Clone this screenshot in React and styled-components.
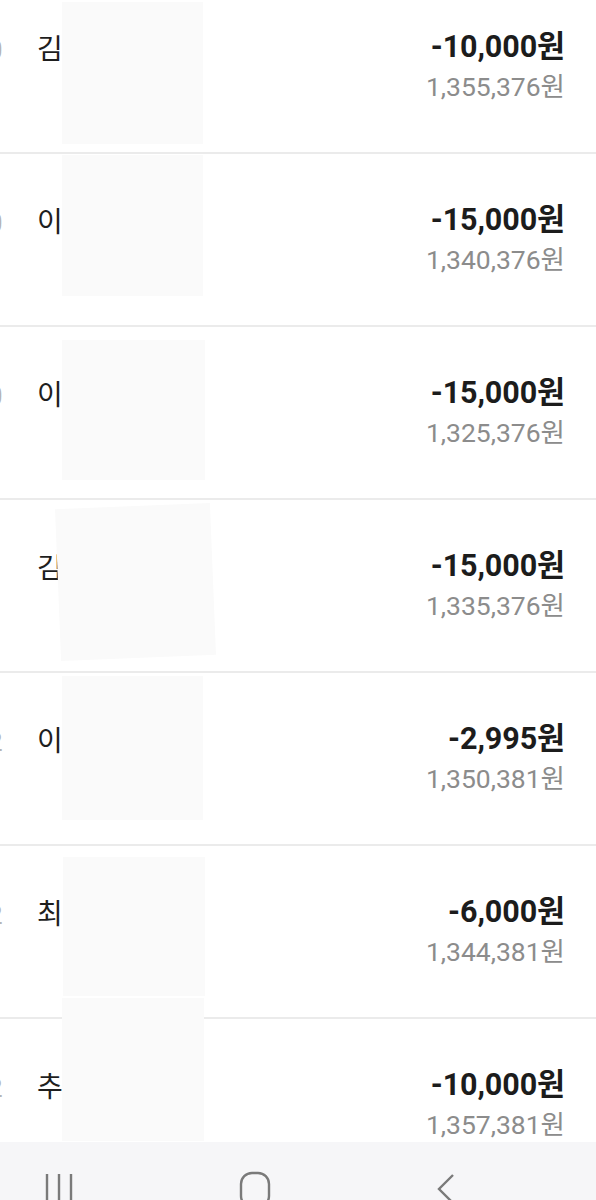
import React from "react";
import styled, { createGlobalStyle } from "styled-components";

const GlobalStyle = createGlobalStyle`
  html, body {
    margin: 0;
    padding: 0;
    background: #ffffff;
    overflow: hidden;
  }
  body {
    font-family: "Roboto", "Noto Sans CJK KR", "Noto Sans", sans-serif;
  }
`;

const Screen = styled.div`
  width: 596px;
  height: 1200px;
  display: flex;
  flex-direction: column;
  overflow: hidden;
  background: #ffffff;
`;

const List = styled.div`
  flex: 1;
  overflow: hidden;
  min-height: 0;
`;

const Rows = styled.div`
  margin-top: -19px;
`;

const Row = styled.div`
  position: relative;
  height: 173px;
  box-sizing: border-box;
  display: flex;
  align-items: center;
  padding: 3px 31px 0 0;
  border-bottom: 2px solid #ebebeb;
`;

const Side = styled.div`
  width: 37px;
  flex-shrink: 0;
  align-self: flex-start;
  padding-top: 47px;
  overflow: visible;
`;

const Stub = styled.span`
  display: block;
  margin-left: -12px;
  font-size: 26px;
  line-height: 38px;
  color: #b5b5b5;
`;

const Body = styled.div`
  flex: 1;
  display: grid;
  grid-template-columns: 1fr auto;
  align-items: center;
`;

const Name = styled.div`
  grid-column: 1;
  grid-row: 1;
  font-family: "Noto Sans CJK KR", sans-serif;
  font-size: 28px;
  line-height: 38px;
  color: #1e1e1e;
`;

const Amount = styled.div`
  grid-column: 2;
  grid-row: 1;
  text-align: right;
  font-size: 30.5px;
  font-weight: 700;
  line-height: 38px;
  color: #1c1c1c;
  letter-spacing: -0.1px;
`;

const Balance = styled.div`
  grid-column: 2;
  grid-row: 2;
  text-align: right;
  font-size: 26.5px;
  line-height: 42px;
  color: #8c8c8c;
`;

const Redaction = styled.div`
  position: absolute;
  left: ${(p) => p.$left}px;
  top: ${(p) => p.$top}px;
  width: ${(p) => p.$width}px;
  height: ${(p) => p.$height}px;
  background: #fafafa;
  transform: rotate(${(p) => p.$tilt || 0}deg);
`;

const NavBar = styled.div`
  height: 58px;
  flex-shrink: 0;
  background: #f6f6f8;
  display: flex;
  align-items: flex-start;
  padding: 18px 0 0 44px;
  gap: 165px;
  box-sizing: border-box;
  overflow: hidden;
`;

const NavIcon = styled.svg`
  display: block;
  flex-shrink: 0;
`;

const rows = [
  { stub: "0", name: "김", amount: "-10,000원", balance: "1,355,376원", box: { left: 62, top: 21, width: 141, height: 142 } },
  { stub: "0", name: "이", amount: "-15,000원", balance: "1,340,376원", box: { left: 62, top: 1, width: 141, height: 141 } },
  { stub: "0", name: "이", amount: "-15,000원", balance: "1,325,376원", box: { left: 62, top: 13, width: 143, height: 140 } },
  { stub: "", name: "김", amount: "-15,000원", balance: "1,335,376원", box: { left: 58, top: 6, width: 155, height: 152, tilt: -2.3 } },
  { stub: "2", name: "이", amount: "-2,995원", balance: "1,350,381원", box: { left: 62, top: 3, width: 141, height: 144 } },
  { stub: "2", name: "최", amount: "-6,000원", balance: "1,344,381원", box: { left: 63, top: 11, width: 142, height: 139 } },
  { stub: "2", name: "추", amount: "-10,000원", balance: "1,357,381원", box: { left: 62, top: -21, width: 142, height: 143 } },
];

function NavButtons() {
  return (
    <NavBar>
      <NavIcon width="30" height="40" viewBox="0 0 30 40">
        <path d="M3 14 V40 M15 14 V40 M27 14 V40" stroke="#7a7a7a" strokeWidth="2.4" fill="none" />
      </NavIcon>
      <NavIcon width="32" height="40" viewBox="0 0 32 40">
        <rect x="2" y="13" width="28" height="34" rx="11" stroke="#7a7a7a" strokeWidth="2.4" fill="none" />
      </NavIcon>
      <NavIcon width="20" height="40" viewBox="0 0 20 40">
        <path d="M17 15 L3 29 L17 43" stroke="#7a7a7a" strokeWidth="2.4" fill="none" />
      </NavIcon>
    </NavBar>
  );
}

export default function App() {
  return (
    <>
      <GlobalStyle />
      <Screen>
        <List>
          <Rows>
            {rows.map((r, i) => (
              <Row key={i}>
                <Side>
                  <Stub>{r.stub}</Stub>
                </Side>
                <Body>
                  <Name>{r.name}</Name>
                  <Amount>{r.amount}</Amount>
                  <Balance>{r.balance}</Balance>
                </Body>
                <Redaction
                  $left={r.box.left}
                  $top={r.box.top}
                  $width={r.box.width}
                  $height={r.box.height}
                  $tilt={r.box.tilt}
                />
              </Row>
            ))}
          </Rows>
        </List>
        <NavButtons />
      </Screen>
    </>
  );
}
